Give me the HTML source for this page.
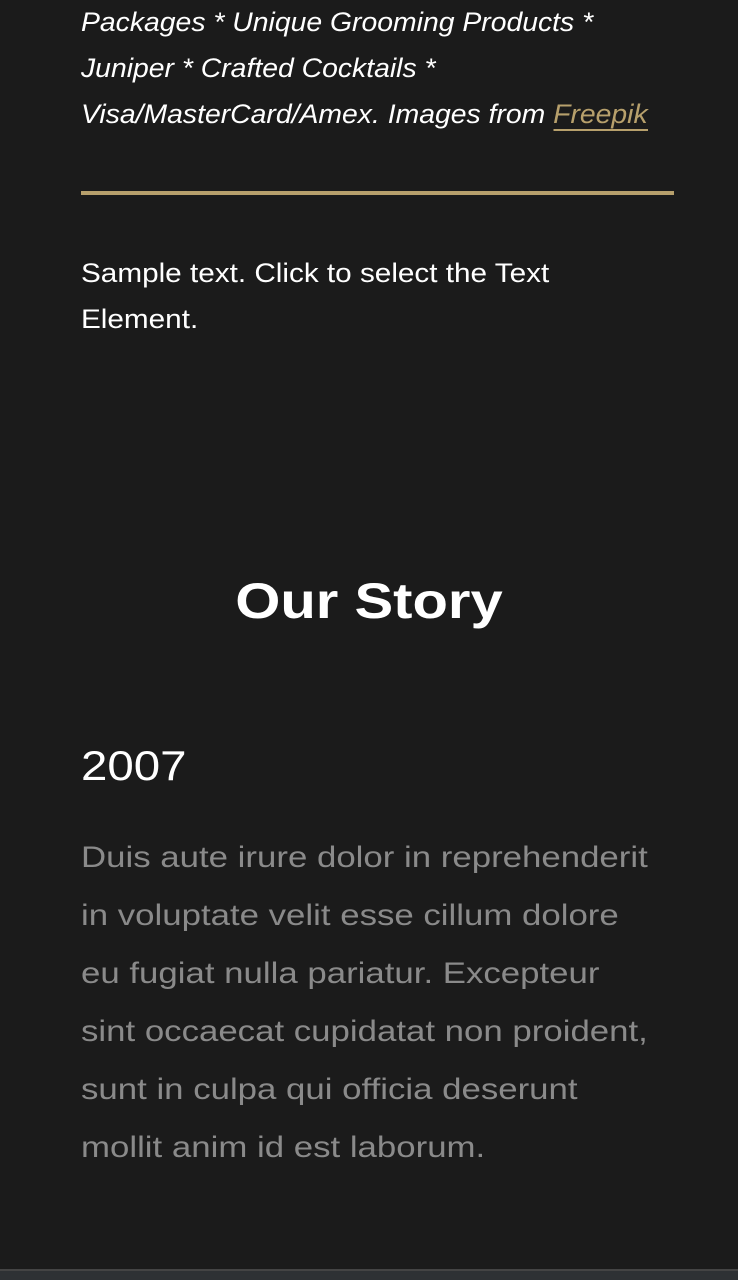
<!DOCTYPE html>
<html><head><style>
html,body{margin:0;padding:0;background:#1b1b1b;width:738px;height:1280px;overflow:hidden;font-family:"Liberation Sans",sans-serif;}
.l{position:absolute;left:81px;white-space:nowrap;}
.it{font-style:italic;font-size:27px;color:#fff;transform-origin:0 0;transform:scaleX(1.05);}
a{color:#b7a06c;text-decoration:none;border-bottom:2px solid #b7a06c;}
</style></head><body>
<div class="l it" style="top:7px">Packages * Unique Grooming Products *</div>
<div class="l it" style="top:53px">Juniper * Crafted Cocktails *</div>
<div class="l it" style="top:99px">Visa/MasterCard/Amex. Images from <a>Freepik</a></div>
<div style="position:absolute;left:81px;top:191px;width:593px;height:4px;background:#b7a06c"></div>
<div class="l" style="top:250px;font-size:27px;color:#fff;line-height:46px;transform-origin:0 0;transform:scaleX(1.10)">Sample text. Click to select the Text<br>Element.</div>
<div style="position:absolute;left:0;width:738px;top:572px;text-align:center;font-size:50px;font-weight:bold;color:#fff;transform:scaleX(1.16)">Our Story</div>
<div class="l" style="top:742px;font-size:42px;color:#fff;transform-origin:0 0;transform:scaleX(1.13)">2007</div>
<div class="l" style="top:829px;font-size:30px;line-height:58px;color:#8a8a8a;transform-origin:0 0;transform:scaleX(1.16)">Duis aute irure dolor in reprehenderit<br>in voluptate velit esse cillum dolore<br>eu fugiat nulla pariatur. Excepteur<br>sint occaecat cupidatat non proident,<br>sunt in culpa qui officia deserunt<br>mollit anim id est laborum.</div>
<div style="position:absolute;left:0;top:1269px;width:738px;height:2px;background:#444"></div>
<div style="position:absolute;left:0;top:1271px;width:738px;height:9px;background:#2e3134"></div>
</body></html>
